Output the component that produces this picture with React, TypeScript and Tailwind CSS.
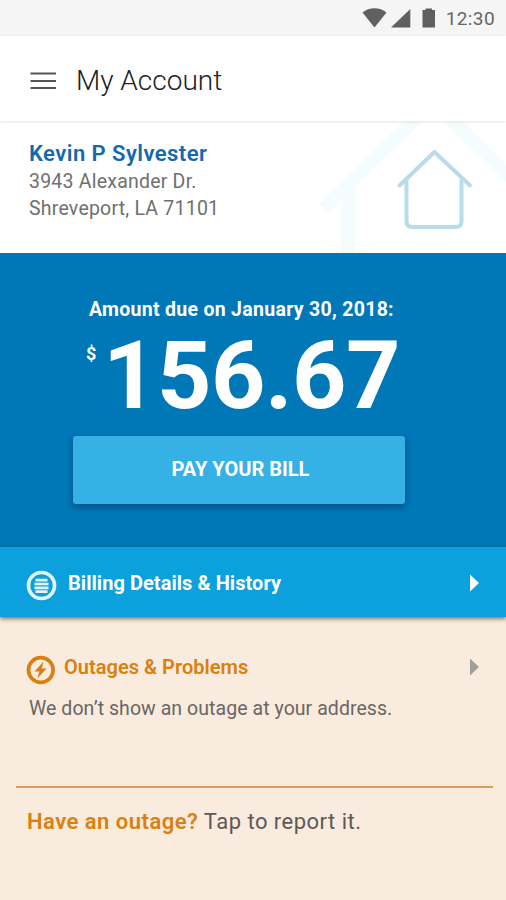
import type { ReactNode } from "react";

function StatusBar() {
  return (
    <div className="flex h-9 items-center justify-end bg-[#f5f5f5] pr-[11px] text-[#666]">
      <svg width="76" height="36" viewBox="0 0 76 36" fill="#606060" className="shrink-0">
        <path d="M0.5 12.5C7 6.8 18 6.8 24.5 12.5L12.5 27.5Z" />
        <path d="M48.300 9V27.5H29Z" />
        <path d="M60.500 10H63.500V8.5H70V10H73V27.5H60.500Z" />
      </svg>
      <span className="ml-[8px] pt-px text-[19px] leading-9 tracking-[0.4px]">12:30</span>
    </div>
  );
}

function Header() {
  return (
    <header className="relative z-10 flex h-[85px] items-center bg-white pt-1 pl-[30px] shadow-[0_1px_3px_rgba(0,0,0,0.1)]">
      <svg width="27" height="20" viewBox="0 0 27 20" stroke="#555" strokeWidth="2">
        <path d="M.5 2.500H26M.5 10H26M.5 17H26" />
      </svg>
      <h1 className="ml-[19px] pt-px text-[28px] leading-8 font-light text-[#222]">My Account</h1>
    </header>
  );
}

function Customer() {
  return (
    <section className="relative h-[132px] overflow-hidden bg-white pt-[19px] pl-[29px]">
      <svg className="absolute inset-0" width="506" height="132" viewBox="0 0 506 132" fill="none">
        <g stroke="#f5fcfd">
          <path d="M324 87L433 -19L542 87" strokeWidth="13" />
          <path d="M348 68V132" strokeWidth="14" />
        </g>
        <g stroke="#b9dbea" strokeWidth="4" strokeLinecap="round" strokeLinejoin="round">
          <path d="M399.500 64.500L434.500 31L470 64.500" />
          <path d="M406.500 59V100Q406.500 106 412 106H456Q461.500 106 461.500 100V59" />
        </g>
      </svg>
      <div className="relative">
        <h2 className="text-[22px] leading-7 font-semibold tracking-[0.45px] text-[#1269b0]">Kevin P Sylvester</h2>
        <p className="text-[19.500px] leading-[27px] tracking-[0.22px] text-[#707070]">3943 Alexander Dr.</p>
        <p className="text-[19.500px] leading-[27px] tracking-[0.22px] text-[#707070]">Shreveport, LA 71101</p>
      </div>
    </section>
  );
}

function AmountDue() {
  return (
    <section className="h-[294px] bg-[#0077b6] pt-[43px] text-white">
      <p className="pl-[89px] text-[19.500px] leading-7 font-bold tracking-[0.29px]">Amount due on January 30, 2018:</p>
      <div className="flex h-[112px] items-start pl-[86px]">
        <span className="mt-[18px] w-[17px] text-[18px] leading-6 font-bold">$</span>
        <span className="mt-[6px] text-[95px] leading-[92px] font-bold tracking-[-0.5px]">156.67</span>
      </div>
      <button className="ml-[73px] flex h-[68px] w-[332px] items-center justify-center rounded-[3px] bg-[#35b1e5] pb-0.5 pl-[3px] text-[20px] leading-6 font-bold shadow-[0_3px_6px_rgba(0,30,70,0.45)]">
        PAY YOUR BILL
      </button>
    </section>
  );
}

function Arrow({ color }: { color: string }) {
  return (
    <svg width="10" height="18" viewBox="0 0 10 18" fill={color} className="mr-[26px] ml-auto">
      <path d="M0 0.500L9 9L0 17.500Z" />
    </svg>
  );
}

function Row({ children, className }: { children: ReactNode; className: string }) {
  return <div className={`flex items-center ${className}`}>{children}</div>;
}

export default function App() {
  return (
    <div className="h-[900px] w-[506px] overflow-hidden bg-[#f9ebde] font-[Roboto,sans-serif]">
      <StatusBar />
      <Header />
      <Customer />
      <AmountDue />
      <Row className="h-[70px] bg-[#0ca0dc] pt-px pl-[26px] text-white shadow-[0_2px_4px_rgba(60,40,20,0.6)]">
        <svg width="31" height="31" viewBox="0 0 31 31" fill="none" stroke="#e3f6ff" className="mt-[5px]">
          <circle cx="15.500" cy="15.500" r="13" strokeWidth="3.700" />
          <path d="M9.500 10.200H21.500M8.500 14H22.500M8.500 17.800H22.500M9.500 21.600H21.500" strokeWidth="2.700" />
        </svg>
        <h2 className="ml-[11px] pt-px text-[20px] leading-7 font-bold tracking-[0.05px]">Billing Details &amp; History</h2>
        <Arrow color="#fff" />
      </Row>
      <Row className="mt-[34px] h-[31px] pl-[26px]">
        <svg width="30" height="30" viewBox="0 0 30 30" fill="none" stroke="#d9800f" className="mt-[6px]">
          <circle cx="14.800" cy="15" r="12.300" strokeWidth="3.700" />
          <path d="M17.500 6.500L8.500 16.500H13.300L11.500 23.500L20.500 13.500H15.800Z" fill="#d9800f" stroke="none" />
        </svg>
        <h2 className="ml-2 text-[20px] leading-7 font-semibold tracking-[0.03px] text-[#d9800f]">Outages &amp; Problems</h2>
        <Arrow color="#a39d97" />
      </Row>
      <p className="mt-[13px] pl-[29px] text-[19.500px] leading-7 tracking-[0.06px] text-[#6a6663]">We don’t show an outage at your address.</p>
      <hr className="mr-[13px] ml-4 mt-[63px] h-0.5 border-0 bg-[#dc9a5c]" />
      <p className="mt-[18px] pl-[27px] text-[22px] leading-8 tracking-[0.48px] text-[#5c5957]">
        <span className="font-semibold text-[#d9800f]">Have an outage?</span> Tap to report it.
      </p>
    </div>
  );
}
